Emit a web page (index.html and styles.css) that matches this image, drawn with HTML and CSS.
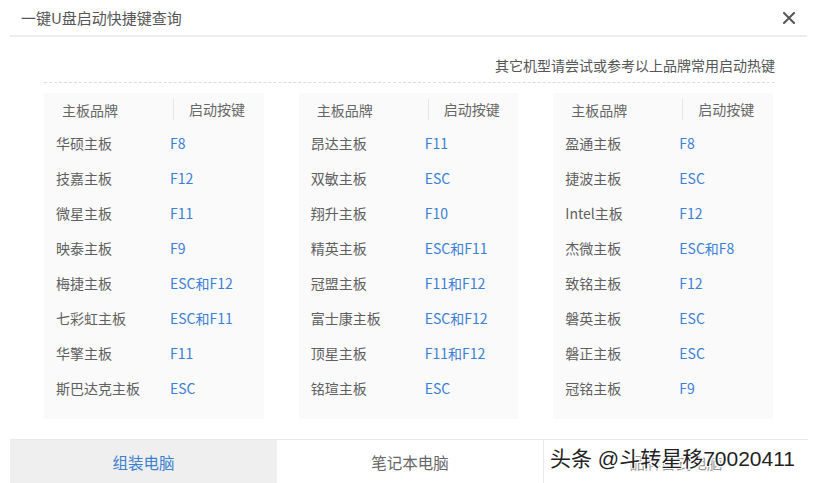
FILE: index.html
```html
<!DOCTYPE html>
<html lang="zh-CN">
<head>
<meta charset="UTF-8" />
<meta name="viewport" content="width=device-width, initial-scale=1" />
<title>一键U盘启动快捷键查询</title>
<link rel="stylesheet" href="styles.css">
</head>
<body>
  <div class="dialog">
    <!-- 标题栏 -->
    <div class="titlebar">
      <span class="title">一键U盘启动快捷键查询</span>
      <span class="close">
        <svg width="12" height="12" viewBox="0 0 12 12"><path d="M1 1L11 11M11 1L1 11" stroke="#555" stroke-width="2" stroke-linecap="round"/></svg>
      </span>
    </div>

    <div class="tip">其它机型请尝试或参考以上品牌常用启动热键</div>

    <div class="panels">
      <div class="panel">
        <div class="head"><span class="h-brand">主板品牌</span><span class="h-key">启动按键</span></div>
        <div class="row"><span>华硕主板</span><b>F8</b></div>
        <div class="row"><span>技嘉主板</span><b>F12</b></div>
        <div class="row"><span>微星主板</span><b>F11</b></div>
        <div class="row"><span>映泰主板</span><b>F9</b></div>
        <div class="row"><span>梅捷主板</span><b>ESC和F12</b></div>
        <div class="row"><span>七彩虹主板</span><b>ESC和F11</b></div>
        <div class="row"><span>华擎主板</span><b>F11</b></div>
        <div class="row"><span>斯巴达克主板</span><b>ESC</b></div>
      </div>
      <div class="panel">
        <div class="head"><span class="h-brand">主板品牌</span><span class="h-key">启动按键</span></div>
        <div class="row"><span>昂达主板</span><b>F11</b></div>
        <div class="row"><span>双敏主板</span><b>ESC</b></div>
        <div class="row"><span>翔升主板</span><b>F10</b></div>
        <div class="row"><span>精英主板</span><b>ESC和F11</b></div>
        <div class="row"><span>冠盟主板</span><b>F11和F12</b></div>
        <div class="row"><span>富士康主板</span><b>ESC和F12</b></div>
        <div class="row"><span>顶星主板</span><b>F11和F12</b></div>
        <div class="row"><span>铭瑄主板</span><b>ESC</b></div>
      </div>
      <div class="panel">
        <div class="head"><span class="h-brand">主板品牌</span><span class="h-key">启动按键</span></div>
        <div class="row"><span>盈通主板</span><b>F8</b></div>
        <div class="row"><span>捷波主板</span><b>ESC</b></div>
        <div class="row"><span>Intel主板</span><b>F12</b></div>
        <div class="row"><span>杰微主板</span><b>ESC和F8</b></div>
        <div class="row"><span>致铭主板</span><b>F12</b></div>
        <div class="row"><span>磐英主板</span><b>ESC</b></div>
        <div class="row"><span>磐正主板</span><b>ESC</b></div>
        <div class="row"><span>冠铭主板</span><b>F9</b></div>
      </div>
    </div>

    <!-- 底部标签 -->
    <div class="tabs">
      <div class="tab active">组装电脑</div>
      <div class="tab">笔记本电脑</div>
      <div class="tab last">品牌台式电脑</div>
      <div class="watermark">头条 @斗转星移70020411</div>
    </div>
  </div>
</body>
</html>
```

FILE: styles.css
```css
body {
  margin: 0;
  padding: 0;
  background: #fff;
  font-family: "Noto Sans CJK SC", "Liberation Sans", sans-serif;
  font-size: 14px;
  color: #666;
  width: 813px;
  height: 483px;
  overflow: hidden;
}
.dialog {
  height: 483px;
  display: flex;
  flex-direction: column;
}
.titlebar {
  height: 35px;
  margin: 0 6px 0 10px;
  padding: 0 12px 0 11px;
  display: flex;
  align-items: center;
  justify-content: space-between;
  border-bottom: 2px solid #ececec;
}
.title {
  font-size: 15px;
  color: #555;
  line-height: 20px;
}
.close {
  display: flex;
  width: 12px;
  height: 12px;
}
.tip {
  margin: 18px 38px 0 44px;
  padding-bottom: 7px;
  line-height: 20px;
  font-size: 14px;
  color: #555;
  text-align: right;
  border-bottom: 1px dashed #dcdcdc;
}
.panels {
  margin: 10px 40px 0 44px;
  display: grid;
  grid-template-columns: repeat(3, 1fr);
  gap: 35px;
}
.panel {
  background: #fafafa;
  padding-bottom: 14px;
}
.head {
  height: 31px;
  padding-top: 1px;
  display: grid;
  grid-template-columns: 129px 1fr;
  align-items: center;
  color: #666;
}
.h-brand {
  padding-left: 18px;
  line-height: 20px;
}
.h-key {
  padding-left: 15px;
  line-height: 21px;
  border-left: 1px solid #e6e6e6;
}
.row {
  height: 35px;
  display: grid;
  grid-template-columns: 126px 1fr;
  align-items: center;
  line-height: 20px;
}
.row span {
  padding-left: 12px;
  color: #5f5f5f;
}
.row b {
  font-weight: normal;
  color: #3a80d6;
}
.tabs {
  position: relative;
  margin: auto 5px 0 10px;
  height: 43px;
  display: grid;
  grid-template-columns: 267px 266px 1fr;
  border-top: 1px solid #e8e8e8;
}
.tab {
  display: flex;
  align-items: center;
  justify-content: center;
  font-size: 15.5px;
  color: #666;
}
.tab.active {
  background: #efefef;
  color: #3a7fd0;
}
.tab.last {
  border-left: 1px solid #e8e8e8;
  color: #999;
}
.watermark {
  position: absolute;
  left: 540px;
  top: 6px;
  font-family: "Liberation Sans", "Noto Sans CJK SC", sans-serif;
  font-size: 21px;
  line-height: 26px;
  color: #222;
  white-space: nowrap;
  text-shadow: 1px 1px 0 #fff, -1px -1px 0 #fff, 1px -1px 0 #fff, -1px 1px 0 #fff;
}
```
